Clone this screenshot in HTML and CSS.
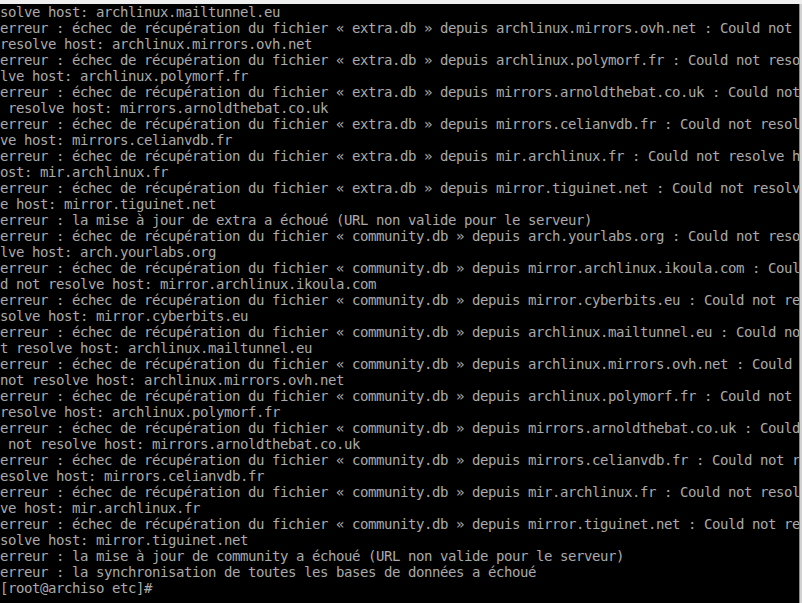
FILE: index.html
```html
<!DOCTYPE html>
<html lang="fr">
<head>
<meta charset="utf-8">
<title>console</title>
<link rel="stylesheet" href="styles.css">
</head>
<body>
<div class="screen">
  <div class="topbar"></div>
  <div class="main">
    <pre class="term">solve host: archlinux.mailtunnel.eu
erreur : échec de récupération du fichier « extra.db » depuis archlinux.mirrors.ovh.net : Could not 
resolve host: archlinux.mirrors.ovh.net
erreur : échec de récupération du fichier « extra.db » depuis archlinux.polymorf.fr : Could not reso
lve host: archlinux.polymorf.fr
erreur : échec de récupération du fichier « extra.db » depuis mirrors.arnoldthebat.co.uk : Could not
 resolve host: mirrors.arnoldthebat.co.uk
erreur : échec de récupération du fichier « extra.db » depuis mirrors.celianvdb.fr : Could not resol
ve host: mirrors.celianvdb.fr
erreur : échec de récupération du fichier « extra.db » depuis mir.archlinux.fr : Could not resolve h
ost: mir.archlinux.fr
erreur : échec de récupération du fichier « extra.db » depuis mirror.tiguinet.net : Could not resolv
e host: mirror.tiguinet.net
erreur : la mise à jour de extra a échoué (URL non valide pour le serveur)
erreur : échec de récupération du fichier « community.db » depuis arch.yourlabs.org : Could not reso
lve host: arch.yourlabs.org
erreur : échec de récupération du fichier « community.db » depuis mirror.archlinux.ikoula.com : Coul
d not resolve host: mirror.archlinux.ikoula.com
erreur : échec de récupération du fichier « community.db » depuis mirror.cyberbits.eu : Could not re
solve host: mirror.cyberbits.eu
erreur : échec de récupération du fichier « community.db » depuis archlinux.mailtunnel.eu : Could no
t resolve host: archlinux.mailtunnel.eu
erreur : échec de récupération du fichier « community.db » depuis archlinux.mirrors.ovh.net : Could 
not resolve host: archlinux.mirrors.ovh.net
erreur : échec de récupération du fichier « community.db » depuis archlinux.polymorf.fr : Could not 
resolve host: archlinux.polymorf.fr
erreur : échec de récupération du fichier « community.db » depuis mirrors.arnoldthebat.co.uk : Could
 not resolve host: mirrors.arnoldthebat.co.uk
erreur : échec de récupération du fichier « community.db » depuis mirrors.celianvdb.fr : Could not r
esolve host: mirrors.celianvdb.fr
erreur : échec de récupération du fichier « community.db » depuis mir.archlinux.fr : Could not resol
ve host: mir.archlinux.fr
erreur : échec de récupération du fichier « community.db » depuis mirror.tiguinet.net : Could not re
solve host: mirror.tiguinet.net
erreur : la mise à jour de community a échoué (URL non valide pour le serveur)
erreur : la synchronisation de toutes les bases de données a échoué
[root@archiso etc]#</pre>
    <div class="edge"></div>
  </div>
</div>
</body>
</html>
```

FILE: styles.css
```css
html, body {
  margin: 0;
  padding: 0;
  background: #000;
}
.screen {
  width: 802px;
  height: 603px;
  display: flex;
  flex-direction: column;
  overflow: hidden;
}
.topbar {
  height: 4px;
  background: #eeeeee;
  flex: none;
}
.main {
  flex: 1;
  display: flex;
  min-height: 0;
}
.term {
  flex: 1;
  margin: 0;
  padding: 0;
  background: #000;
  color: #aaaaaa;
  font-family: "DejaVu Sans Mono", "Liberation Mono", monospace;
  font-size: 14px;
  letter-spacing: -0.428px;
  line-height: 16px;
  white-space: pre;
  overflow: hidden;
}
.edge {
  width: 3px;
  flex: none;
  background: #d2d2d2;
  border-left: 1px solid #8a8a8a;
  box-sizing: border-box;
}
```
